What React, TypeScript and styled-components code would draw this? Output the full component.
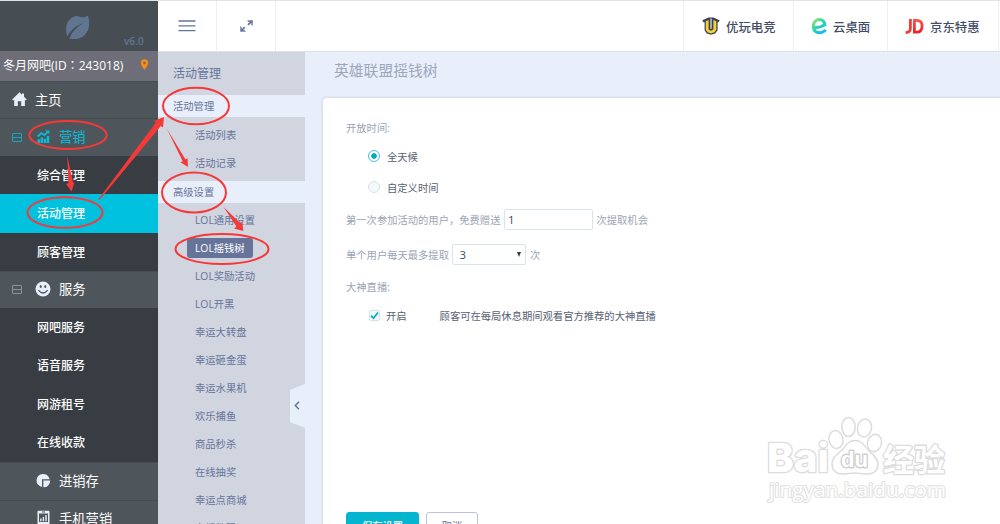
import React from "react";
import styled, { createGlobalStyle, css } from "styled-components";

const GlobalStyle = createGlobalStyle`
  * { box-sizing: border-box; }
  html, body { margin: 0; overflow: hidden; }
  body {
    font-family: "Open Sans", "Noto Sans CJK SC", sans-serif;
    background: #e8eefa;
  }
`;

const Page = styled.div`
  position: relative;
  width: 1000px;
  height: 524px;
  overflow: hidden;
  display: flex;
  border-top: 1px solid #e2e3e6;
`;

const Sidebar = styled.nav`
  width: 158px;
  flex: none;
  background: #373d42;
  color: #fff;
  overflow: hidden;
`;

const Brand = styled.div`
  height: 50px;
  background: #474e53;
  display: flex;
  align-items: flex-start;
  padding: 14px 14px 0 65px;
  justify-content: space-between;
  color: #5f7590;
`;

const Version = styled.span`
  font-size: 10px;
  line-height: 14px;
  font-weight: 600;
  letter-spacing: 0.15px;
  margin-top: 19px;
`;

const Account = styled.div`
  height: 30px;
  background: #6d6e78;
  display: flex;
  align-items: center;
  justify-content: space-between;
  padding: 0 9px 3px 3px;
  font-size: 12px;
  white-space: nowrap;
`;

const Colon = styled.span`
  font-family: "Noto Sans CJK TC", sans-serif;
`;

const Group = styled.div<{ $active?: boolean; $h?: number }>`
  height: ${(p) => p.$h ?? 38}px;
  padding-bottom: 2px;
  background: #4f565b;
  border-top: 1px solid #464d52;
  display: flex;
  align-items: center;
  font-size: 13.3px;
  color: ${(p) => (p.$active ? "#04bfdc" : "#fff")};
`;

const Toggle = styled.span<{ $active?: boolean }>`
  width: 10px;
  height: 9px;
  margin: 2px 0 0 12px;
  border: 1px solid ${(p) => (p.$active ? "#0eaac3" : "#87949c")};
  border-radius: 1px;
  display: flex;
  align-items: center;
  &::after {
    content: "";
    width: 100%;
    height: 1px;
    background: ${(p) => (p.$active ? "#0eaac3" : "#87949c")};
  }
`;

const GroupIcon = styled.span<{ $left: number }>`
  width: 16px;
  margin-left: ${(p) => p.$left}px;
  margin-right: 8px;
  display: flex;
  justify-content: center;
`;

const SubItem = styled.div<{ $active?: boolean; $h?: number }>`
  height: ${(p) => p.$h ?? 38.3}px;
  line-height: 39px;
  padding-left: 37px;
  font-size: 12px;
  font-weight: 500;
  background: ${(p) => (p.$active ? "#00c1de" : "transparent")};
`;

const Body = styled.div`
  flex: 1;
  min-width: 0;
  display: flex;
  flex-direction: column;
`;

const Topbar = styled.header`
  height: 51px;
  flex: none;
  background: #fff;
  border-bottom: 1px solid #dde1ea;
  display: flex;
  padding-right: 1px;
`;

const ToolButton = styled.button<{ $w: number }>`
  width: ${(p) => p.$w}px;
  border: 0;
  border-right: 1px solid #eceef4;
  background: none;
  padding: 0;
  display: flex;
  align-items: center;
  justify-content: center;
`;

const TopLinks = styled.div`
  margin-left: auto;
  display: flex;
  border-left: 1px solid #eceef4;
`;

const TopLink = styled.a<{ $w: number; $gap: number; $pad: number }>`
  width: ${(p) => p.$w}px;
  padding-left: ${(p) => p.$pad}px;
  border-right: 1px solid #eceef4;
  display: flex;
  align-items: center;
  gap: ${(p) => p.$gap}px;
  font-size: 12.4px;
  font-weight: 500;
  color: #434d66;
  white-space: nowrap;
  svg { flex: none; }
  span { padding-top: 2px; }
`;

const Content = styled.div`
  flex: 1;
  min-height: 0;
  display: flex;
`;

const Menu = styled.aside`
  position: relative;
  width: 147px;
  flex: none;
  background: #d1d5e0;
  color: #66749a;
  overflow: hidden;
`;

const MenuTitle = styled.div`
  height: 43px;
  line-height: 43px;
  padding-left: 15px;
  font-size: 12px;
`;

const MenuBand = styled.div`
  height: 22px;
  line-height: 22px;
  padding-left: 15px;
  background: #e8eefa;
  font-size: 10.3px;
`;

const MenuList = styled.div<{ $first?: boolean }>`
  padding: ${(p) => (p.$first ? "4px 0 4px 29px" : "3px 0 0 29px")};
`;

const MenuItem = styled.div<{ $active?: boolean }>`
  height: 28px;
  display: flex;
  align-items: center;
  font-size: 10.3px;
  span {
    padding: 0 8px;
    line-height: 20px;
    ${(p) =>
      p.$active &&
      css`
        background: #66749a;
        color: #fff;
        border-radius: 3px;
      `}
  }
`;

const Collapse = styled.button`
  position: absolute;
  right: 0;
  top: 332px;
  width: 15px;
  height: 44px;
  border: 0;
  padding: 0 0 2px 4px;
  background: #e8eefa;
  clip-path: polygon(100% 0, 0 6px, 0 38px, 100% 100%);
  display: flex;
  align-items: center;
`;

const Main = styled.main`
  flex: 1;
  min-width: 0;
  display: flex;
  flex-direction: column;
  padding-left: 17px;
`;

const Heading = styled.h1`
  flex: none;
  margin: 0;
  height: 45px;
  line-height: 37px;
  padding-left: 12px;
  font-size: 14.8px;
  font-weight: 400;
  color: #9ca8ba;
`;

const Card = styled.form`
  flex: 1;
  min-height: 0;
  background: #fff;
  border: 1px solid #dbe2ef;
  border-width: 1px 0 0 1px;
  border-radius: 5px 0 0 0;
  box-shadow: 0 0 1px 1px #dfe5f1;
  padding: 15px 0 0 23px;
  font-size: 10.3px;
  color: #9aa5b6;
`;

const Line = styled.div<{ $h: number; $indent?: number; $dark?: boolean }>`
  height: ${(p) => p.$h}px;
  padding-left: ${(p) => p.$indent ?? 0}px;
  color: ${(p) => (p.$dark ? "#566274" : "inherit")};
  display: flex;
  align-items: center;
  white-space: nowrap;
`;

const Radio = styled.span<{ $on?: boolean }>`
  width: 12px;
  height: 12px;
  margin-right: 7px;
  border-radius: 50%;
  border: 1px solid ${(p) => (p.$on ? "#47bfd4" : "#d5e2e6")};
  background: ${(p) => (p.$on ? "radial-gradient(circle, #04a6c2 2.4px, #fff 3.2px)" : "#f4fafb")};
`;

const Check = styled.span`
  width: 11px;
  height: 11px;
  margin-right: 6px;
  border-radius: 2px;
  border: 1px solid #cfe3ea;
  background: #f4fafb;
  display: flex;
`;

const Hint = styled.span`
  margin-left: 33px;
`;

const Field = styled.div<{ $w: number; $pad: number }>`
  width: ${(p) => p.$w}px;
  height: 21px;
  margin: 0 3.5px;
  padding: 0 4px 0 ${(p) => p.$pad}px;
  border: 1px solid #d9e3e9;
  border-radius: 2px;
  font-size: 11.4px;
  color: #3f4c5e;
  display: flex;
  align-items: center;
  justify-content: space-between;
`;

const Caret = styled.i`
  border: 2.5px solid transparent;
  border-top: 5px solid #2f3c4c;
  border-bottom: 0;
`;

const Actions = styled.div`
  display: flex;
  gap: 7px;
  margin-top: 183px;
`;

const Button = styled.button<{ $primary?: boolean }>`
  width: ${(p) => (p.$primary ? 73 : 52)}px;
  height: 26px;
  padding: 0;
  border-radius: 3px;
  border: 1px solid ${(p) => (p.$primary ? "#04b5d0" : "#bcc3da")};
  background: ${(p) => (p.$primary ? "#04b5d0" : "#fff")};
  color: ${(p) => (p.$primary ? "#fff" : "#66708c")};
  font-family: inherit;
  font-size: 10.3px;
  font-weight: ${(p) => (p.$primary ? 500 : 400)};
`;

const Overlay = styled.svg`
  position: absolute;
  left: 0;
  top: -1px;
  pointer-events: none;
`;

const menuItems = [
  "LOL通用设置", "LOL摇钱树", "LOL奖励活动", "LOL开黑", "幸运大转盘", "幸运砸金蛋",
  "幸运水果机", "欢乐捕鱼", "商品秒杀", "在线抽奖", "幸运点商城", "主播数码",
];

const Leaf = () => (
  <svg width="26" height="26" viewBox="0 0 26 26">
    <path d="M2.300 21.500C-.8 11.500 2.500 3 11 1c2.300-.4 4 1.500 6.500 1.300 2.200 0 4-.8 5.500-1.600 1.900 7.300 2.100 14.300-3.500 19.500-4 3.800-10 4.600-15 3.300C6.500 17.500 11 12.500 18 8.200 11 10.700 5.500 15 2.300 21.500Z" fill="currentColor" />
  </svg>
);

const HomeIcon = () => (
  <svg width="15" height="14" viewBox="0 0 15 14" fill="#e8eefa">
    <path d="M7.500.2 10 2.700V1.500h2v3.200l2.800 2.800-1 .9-.9-.7V14H9.200V9.300H5.800V14H2.200V7.700l-1 .8-1-1Z" />
  </svg>
);

const ChartIcon = () => (
  <svg width="13" height="13" viewBox="0 0 13 13" fill="#04bfdc">
    <path d="M.5 9.200h2.400V13H.5zM3.600 7.500H6V13H3.600zM6.700 8.700h2.400V13H6.700zM9.800 6h2.400v7H9.800z" />
    <path d="M.6 6.500 4.500 3l2.800 2.200L11 1.700" fill="none" stroke="#04bfdc" strokeWidth="1.700" />
    <path d="M8.300.4h4v3.800Z" />
  </svg>
);

const SmileIcon = () => (
  <svg width="16" height="16" viewBox="0 0 16 16">
    <circle cx="8" cy="8" r="7.500" fill="#e8eefa" />
    <ellipse cx="5.700" cy="5.500" rx="1" ry="1.600" fill="#4f565b" />
    <ellipse cx="10.300" cy="5.500" rx="1" ry="1.600" fill="#4f565b" />
    <path d="M3.300 9.200q4.700 5.600 9.400 0" fill="none" stroke="#4f565b" strokeWidth="1.300" />
  </svg>
);

const PieIcon = () => (
  <svg width="15" height="15" viewBox="0 0 15 15" fill="#e8eefa">
    <path d="M6 14A6.600 6.600 0 1 1 13.600 6.300H6Z" />
    <path d="M7.400 7.600h6.800a6.600 6.600 0 0 1-6.800 6.700Z" />
  </svg>
);

const PhoneIcon = () => (
  <svg width="13" height="16" viewBox="0 0 13 16">
    <rect x=".5" y=".7" width="12" height="14.600" rx="1" fill="#e8eefa" />
    <path d="M2 3.500h9V12H2Z" fill="#4f565b" />
    <path d="M3.100 8.500h1.400v2.700H3.100zM5.700 7h1.400v4.200H5.700zM8.300 5h1.400v6.200H8.300z" fill="#e8eefa" />
    <path d="M5 2h3" stroke="#4f565b" />
  </svg>
);

const EsportIcon = () => (
  <svg width="18" height="18" viewBox="0 0 18 18">
    <path d="M.4 3.200 6.500.6h5l6.100 2.600-.9 2H15.600v8L13.200 16.400 9 17.700 4.800 16.400 2.600 13.200v-8H1.300Z" fill="#3a425c" />
    <path d="M3.800 4.300 6.600 3v9.300L8 13.600h2l1.400-1.300V3l2.900 1.300v8.500l-1.800 2.500L9 16.500l-3.500-1.200-1.700-2.500Z" fill="#f6d22a" />
    <path d="M8 1.600h2v9.800l-1 .9-1-.9Z" fill="#a2a8ae" />
  </svg>
);

const CloudIcon = () => (
  <svg width="17" height="18" viewBox="0 0 17 18">
    <defs>
      <linearGradient id="cloudFill" x1="0" y1="0" x2=".8" y2="1">
        <stop offset="0" stopColor="#9be36b" />
        <stop offset=".5" stopColor="#22d6b0" />
        <stop offset="1" stopColor="#14b9f4" />
      </linearGradient>
    </defs>
    <path d="M3 10.300C6.500 11 10.500 9.800 13.800 7.700 13.300 4.200 11.500 2.400 8.500 2.400 4.900 2.400 2.300 5.200 2.300 9.200c0 4.200 2.700 6.600 6.300 6.600 2.500 0 4.300-.9 6-2.900" fill="none" stroke="url(#cloudFill)" strokeWidth="3" />
  </svg>
);

const JdIcon = () => (
  <svg width="19" height="17" viewBox="0 0 19 17" fill="none">
    <defs>
      <linearGradient id="jdFill" x1="0" y1="0" x2="0" y2="1">
        <stop offset="0" stopColor="#fb5147" />
        <stop offset="1" stopColor="#e8242c" />
      </linearGradient>
    </defs>
    <path d="M5.400 1v9.500q0 4-4.800 4.200" stroke="#f03a38" strokeWidth="2.700" />
    <path d="M9.400 2.300h2.200c3.700 0 5.500 2 5.500 5.600 0 3.900-2 6.200-5.700 6.200h-2Z" stroke="url(#jdFill)" strokeWidth="2.800" />
  </svg>
);

const Annotations = () => (
  <Overlay width="1000" height="524" viewBox="0 0 1000 524">
    <g fill="none" stroke="#f63838" strokeWidth="2">
      <ellipse cx="68" cy="135" rx="38.700" ry="14" />
      <ellipse cx="65" cy="212.500" rx="37.500" ry="15.300" />
      <ellipse cx="196" cy="106" rx="33" ry="18.300" />
      <ellipse cx="194" cy="192.500" rx="32" ry="20" />
      <ellipse cx="222" cy="249" rx="46.500" ry="15" />
    </g>
    <g fill="#f63838">
      <path d="M67.300 156 73 182.500 74.500 182.300 71.500 191.500 66 184 68.400 183.300Z" />
      <path d="M98.200 199.500 156 122.500 154 121 164 117 163 127.500 160.800 126 99.500 200Z" />
      <path d="M167 129 185.500 159.500 187.600 158.300 188 167 180.500 162.300 182.700 161.200Z" />
      <path d="M223.500 207 240.700 223.500 242.300 221.800 243.300 231 234 228.600 236.500 226.500Z" />
    </g>
  </Overlay>
);

const Watermark = () => (
  <Overlay width="1000" height="524" viewBox="0 0 1000 524">
    <g fill="#fff" stroke="#dcdcdc" strokeWidth="1.500" strokeLinejoin="round">
      <g paintOrder="stroke" strokeWidth="2.600">
        <text x="767" y="472" fontFamily="Inter" fontWeight="800" fontSize="40" textLength="62" lengthAdjust="spacingAndGlyphs">Bai</text>
        <text x="883" y="471" fontFamily="Noto Sans CJK SC" fontSize="31" fontWeight="700" textLength="62">经验</text>
      </g>
      <ellipse cx="836" cy="439.500" rx="7" ry="9" transform="rotate(-12 836 439.500)" />
      <ellipse cx="848.500" cy="427" rx="6.700" ry="9.500" />
      <ellipse cx="864.500" cy="428" rx="7" ry="9" transform="rotate(12 864.500 428)" />
      <ellipse cx="874.500" cy="443" rx="7" ry="8.700" transform="rotate(14 874.500 443)" />
      <path d="M855 440.500c7 0 9 5 13 9.500 5 5 10 8 10 14 0 7-5 10-10 10-5 0-9-1-13-1s-8 1-13 1c-6 0-10-4-10-10 0-7 5-9 10-14 4-4.500 6-9.500 13-9.500Z" />
      <text x="841" y="467" fontFamily="Liberation Sans" fontWeight="700" fontSize="22" textLength="27" lengthAdjust="spacingAndGlyphs" paintOrder="stroke" strokeWidth="2.800" stroke="#d0d0d0">du</text>
      <text x="769" y="496.500" fontFamily="Open Sans" fontSize="20" fontWeight="400" textLength="177" lengthAdjust="spacingAndGlyphs" paintOrder="stroke" strokeWidth="2.200" stroke="#e2e2e2">jingyan.baidu.com</text>
    </g>
  </Overlay>
);

export default function App() {
  return (
    <>
      <GlobalStyle />
      <Page>
        <Sidebar>
          <Brand><Leaf /><Version>v6.0</Version></Brand>
          <Account>
            <span>冬月网吧(ID<Colon>：</Colon>243018)</span>
            <svg width="9" height="11" viewBox="0 0 9 11">
              <path d="M4.500 10.800C2 7.500.8 5.800.8 4a3.700 3.700 0 0 1 7.400 0c0 1.800-1.200 3.500-3.700 6.800Z" fill="#f98a15" />
              <circle cx="4.500" cy="4" r="1.300" fill="#6d6e78" />
            </svg>
          </Account>
          <Group $h={37}><GroupIcon $left={11}><HomeIcon /></GroupIcon>主页</Group>
          <Group $active $h={38}><Toggle $active /><GroupIcon $left={13}><ChartIcon /></GroupIcon>营销</Group>
          <SubItem>综合管理</SubItem>
          <SubItem $active>活动管理</SubItem>
          <SubItem>顾客管理</SubItem>
          <Group $h={37}><Toggle /><GroupIcon $left={13}><SmileIcon /></GroupIcon>服务</Group>
          <SubItem $h={38.5}>网吧服务</SubItem>
          <SubItem $h={38.5}>语音服务</SubItem>
          <SubItem $h={38.5}>网游租号</SubItem>
          <SubItem $h={38.5}>在线收款</SubItem>
          <Group $h={38}><GroupIcon $left={35}><PieIcon /></GroupIcon>进销存</Group>
          <Group $h={38}><GroupIcon $left={35}><PhoneIcon /></GroupIcon>手机营销</Group>
        </Sidebar>
        <Body>
          <Topbar>
            <ToolButton $w={59}>
              <svg width="18" height="12" viewBox="0 0 18 12" stroke="#66749a" strokeWidth="1.300">
                <path d="M.5 1h17M.5 5.800h17M.5 10.600h17" />
              </svg>
            </ToolButton>
            <ToolButton $w={59}>
              <svg width="13" height="12" viewBox="0 0 13 12" fill="#66749a" stroke="#66749a">
                <path d="M12 1 8 4.800M1 11l3.800-3.800" fill="none" strokeWidth="1.700" />
                <path d="M7.500.6h5v4.900l-1.200-.9V1.800H8.400ZM.5 6.500v4.900h5l-.9-1.200H1.700V7.400Z" strokeWidth=".4" />
              </svg>
            </ToolButton>
            <TopLinks>
              <TopLink $w={110} $pad={18} $gap={6}><EsportIcon /><span>优玩电竞</span></TopLink>
              <TopLink $w={94} $pad={17} $gap={5}><CloudIcon /><span>云桌面</span></TopLink>
              <TopLink $w={111} $pad={17} $gap={6}><JdIcon /><span>京东特惠</span></TopLink>
            </TopLinks>
          </Topbar>
          <Content>
            <Menu>
              <MenuTitle>活动管理</MenuTitle>
              <MenuBand>活动管理</MenuBand>
              <MenuList $first>
                <MenuItem><span>活动列表</span></MenuItem>
                <MenuItem><span>活动记录</span></MenuItem>
              </MenuList>
              <MenuBand>高级设置</MenuBand>
              <MenuList>
                {menuItems.map((t) => (
                  <MenuItem key={t} $active={t === "LOL摇钱树"}><span>{t}</span></MenuItem>
                ))}
              </MenuList>
              <Collapse>
                <svg width="6" height="9" viewBox="0 0 6 9" fill="none" stroke="#66749a" strokeWidth="1.500"><path d="M5 .8 1.300 4.500 5 8.200" /></svg>
              </Collapse>
            </Menu>
            <Main>
              <Heading>英雄联盟摇钱树</Heading>
              <Card>
                <Line $h={28}>开放时间:</Line>
                <Line $h={30} $indent={22} $dark><Radio $on />全天候</Line>
                <Line $h={32} $indent={22} $dark><Radio />自定义时间</Line>
                <Line $h={33}>第一次参加活动的用户，免费赠送<Field $w={89} $pad={3}>1</Field>次提取机会</Line>
                <Line $h={36}>单个用户每天最多提取<Field $w={74} $pad={6}>3<Caret /></Field>次</Line>
                <Line $h={29}>大神直播:</Line>
                <Line $h={28} $indent={23} $dark>
                  <Check>
                    <svg width="9" height="9" viewBox="0 0 9 9" fill="none" stroke="#04a6c2" strokeWidth="1.700"><path d="m1 4.700 2.500 2.500L8 1.500" /></svg>
                  </Check>
                  开启<Hint>顾客可在每局休息期间观看官方推荐的大神直播</Hint>
                </Line>
                <Actions>
                  <Button type="button" $primary>保存设置</Button>
                  <Button type="button">取消</Button>
                </Actions>
              </Card>
            </Main>
          </Content>
        </Body>
        <Watermark />
        <Annotations />
      </Page>
    </>
  );
}
